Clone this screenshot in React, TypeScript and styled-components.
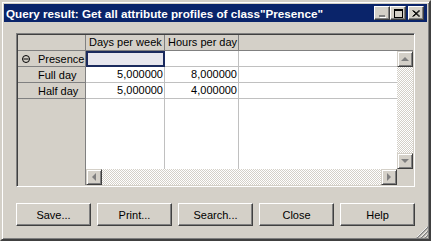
import React from "react";
import styled, { createGlobalStyle } from "styled-components";

const face = "#d4d0c8";
const shadow = "#808080";
const dark = "#404040";
const gridLine = "#c0c0c0";
const navy = "#0a246a";

const Global = createGlobalStyle`
  html, body { margin: 0; padding: 0; background: ${face}; }
  body { font-family: "Liberation Sans", Arial, sans-serif; font-size: 11px; color: #000; }
`;

const Window = styled.div`
  position: relative;
  width: 431px;
  height: 241px;
  box-sizing: border-box;
  background: ${face};
  border: 2px solid;
  border-color: ${face} ${dark} ${dark} ${face};
  box-shadow: inset 1px 1px #fff, inset -1px -1px ${shadow};
  padding: 2px;
  display: flex;
  flex-direction: column;
`;

const TitleBar = styled.div`
  height: 18px;
  flex: none;
  background: ${navy};
  display: flex;
  align-items: center;
  padding: 0 3px 0 2px;
`;

const Title = styled.div`
  flex: 1;
  color: #fff;
  font-weight: bold;
  font-size: 11.7px;
  white-space: nowrap;
`;

const CapButton = styled.div<{ $gap?: boolean }>`
  width: 16px;
  height: 14px;
  box-sizing: border-box;
  margin-left: ${(p) => (p.$gap ? "2px" : "0")};
  background: ${face};
  border: 1px solid;
  border-color: #fff ${dark} ${dark} #fff;
  box-shadow: inset -1px -1px ${shadow};
  display: flex;
  align-items: center;
  justify-content: center;
`;

const Body = styled.div`
  flex: 1;
  display: flex;
  flex-direction: column;
  padding: 11px 12px;
`;

const Frame = styled.div`
  height: 154px;
  box-sizing: border-box;
  border: 1px solid;
  border-color: ${shadow} #fff #fff ${shadow};
  box-shadow: inset 1px 1px ${dark}, inset -1px -1px ${face};
  padding: 1px;
  display: grid;
  grid-template-columns: 68px 79px 74px 1fr 16px;
  grid-template-rows: 16px 1fr 16px;
`;

const HeadCell = styled.div<{ $span?: number; $last?: boolean }>`
  grid-column: span ${(p) => p.$span ?? 1};
  box-sizing: border-box;
  background: ${face};
  border-bottom: 1px solid ${shadow};
  border-right: ${(p) => (p.$last ? "none" : `1px solid ${shadow}`)};
  padding: 0 3px;
  line-height: 15px;
  white-space: nowrap;
  overflow: hidden;
`;

const RowHeads = styled.div`
  grid-column: 1;
  grid-row: 2 / span 2;
  background: ${face};
  border-right: 1px solid ${shadow};
  display: flex;
  flex-direction: column;
`;

const RowHead = styled.div`
  height: 16px;
  box-sizing: border-box;
  border-bottom: 1px solid ${shadow};
  display: flex;
  align-items: center;
  padding-left: 4px;
  gap: 8px;
  white-space: nowrap;
`;

const IconSlot = styled.span`
  width: 8px;
  height: 8px;
  display: inline-flex;
`;

const Data = styled.div`
  grid-column: 2 / span 3;
  grid-row: 2;
  background: #fff;
  display: flex;
  min-height: 0;
`;

const Column = styled.div<{ $w?: number }>`
  width: ${(p) => (p.$w ? `${p.$w}px` : "auto")};
  flex: ${(p) => (p.$w ? "none" : "1")};
  display: flex;
  flex-direction: column;
`;

const Cell = styled.div<{ $line?: boolean; $selected?: boolean }>`
  height: 16px;
  box-sizing: border-box;
  border-bottom: 1px solid ${gridLine};
  border-right: ${(p) => (p.$line ? `1px solid ${gridLine}` : "none")};
  text-align: right;
  padding-right: 1px;
  line-height: 15px;
  white-space: nowrap;
  ${(p) =>
    p.$selected &&
    `
    border: 2px solid #1a2a5e;
    background: #e6e6ee;
  `}
`;

const Filler = styled.div<{ $line?: boolean }>`
  flex: 1;
  border-right: ${(p) => (p.$line ? `1px solid ${gridLine}` : "none")};
`;

const VScroll = styled.div`
  grid-column: 5;
  grid-row: 2;
  display: flex;
  flex-direction: column;
  min-height: 0;
`;

const HScroll = styled.div`
  grid-column: 2 / span 3;
  grid-row: 3;
  display: flex;
`;

const Corner = styled.div`
  grid-column: 5;
  grid-row: 3;
  background: ${face};
`;

const Track = styled.div`
  flex: 1;
  background: repeating-conic-gradient(${face} 0 25%, #fff 0 50%) 0 0 / 2px 2px;
`;

const ScrollButton = styled.div`
  width: 16px;
  height: 16px;
  flex: none;
  box-sizing: border-box;
  background: ${face};
  border: 1px solid;
  border-color: ${face} ${dark} ${dark} ${face};
  box-shadow: inset 1px 1px #fff, inset -1px -1px ${shadow};
  display: flex;
  align-items: center;
  justify-content: center;
`;

const Arrow = styled.span<{ $dir: "up" | "down" | "left" | "right" }>`
  width: 0;
  height: 0;
  border: 4px solid transparent;
  ${(p) =>
    p.$dir === "up"
      ? `border-bottom-color: ${shadow}; border-top-width: 0; margin-top: -1px;`
      : p.$dir === "down"
      ? `border-top-color: ${shadow}; border-bottom-width: 0;`
      : p.$dir === "left"
      ? `border-right-color: ${shadow}; border-left-width: 0; margin-left: -1px;`
      : `border-left-color: ${shadow}; border-right-width: 0;`}
`;

const Buttons = styled.div`
  margin-top: 16px;
  display: flex;
  gap: 6px;
`;

const Button = styled.div`
  width: 75px;
  height: 23px;
  box-sizing: border-box;
  background: ${face};
  border: 1px solid;
  border-color: #fff ${dark} ${dark} #fff;
  box-shadow: inset -1px -1px ${shadow};
  display: flex;
  align-items: center;
  justify-content: center;
`;

const Grip = styled.svg`
  position: absolute;
  right: 0;
  bottom: 0;
`;

const rows = [
  { name: "Full day", days: "5,000000", hours: "8,000000" },
  { name: "Half day", days: "5,000000", hours: "4,000000" },
];

function Collapse() {
  return (
    <svg width="8" height="8" viewBox="0 0 8 8">
      <circle cx="4" cy="4" r="3.5" fill="none" stroke="#000" />
      <line x1="1.5" y1="4" x2="6.5" y2="4" stroke="#000" />
    </svg>
  );
}

export default function App() {
  return (
    <>
      <Global />
      <Window>
        <TitleBar>
          <Title>Query result: Get all attribute profiles of class"Presence"</Title>
          <CapButton>
            <svg width="10" height="9" viewBox="0 0 10 9">
              <rect x="2" y="6" width="6" height="2" fill={shadow} />
              <rect x="3" y="8" width="6" height="1" fill="#fff" />
            </svg>
          </CapButton>
          <CapButton>
            <svg width="9" height="9" viewBox="0 0 9 9">
              <rect x="0.5" y="1.5" width="8" height="7" fill="none" stroke="#000" />
              <rect x="0" y="0" width="9" height="2" fill="#000" />
            </svg>
          </CapButton>
          <CapButton $gap>
            <svg width="8" height="7" viewBox="0 0 8 7">
              <path d="M0.5 0.5 L7 6.5 M1.5 0.5 L8 6.5 M7 0.5 L0.5 6.5 M8 0.5 L1.5 6.5" stroke="#000" strokeWidth="1" />
            </svg>
          </CapButton>
        </TitleBar>
        <Body>
          <Frame>
            <HeadCell />
            <HeadCell>Days per week</HeadCell>
            <HeadCell>Hours per day</HeadCell>
            <HeadCell $span={2} $last />
            <RowHeads>
              <RowHead>
                <IconSlot>
                  <Collapse />
                </IconSlot>
                Presence
              </RowHead>
              {rows.map((r) => (
                <RowHead key={r.name}>
                  <IconSlot />
                  {r.name}
                </RowHead>
              ))}
            </RowHeads>
            <Data>
              <Column $w={79}>
                <Cell $line $selected />
                {rows.map((r) => (
                  <Cell key={r.name} $line>
                    {r.days}
                  </Cell>
                ))}
                <Filler $line />
              </Column>
              <Column $w={74}>
                <Cell $line />
                {rows.map((r) => (
                  <Cell key={r.name} $line>
                    {r.hours}
                  </Cell>
                ))}
                <Filler $line />
              </Column>
              <Column>
                <Cell />
                {rows.map((r) => (
                  <Cell key={r.name} />
                ))}
                <Filler />
              </Column>
            </Data>
            <VScroll>
              <ScrollButton>
                <Arrow $dir="up" />
              </ScrollButton>
              <Track />
              <ScrollButton>
                <Arrow $dir="down" />
              </ScrollButton>
            </VScroll>
            <HScroll>
              <ScrollButton>
                <Arrow $dir="left" />
              </ScrollButton>
              <Track />
              <ScrollButton>
                <Arrow $dir="right" />
              </ScrollButton>
            </HScroll>
            <Corner />
          </Frame>
          <Buttons>
            <Button>Save...</Button>
            <Button>Print...</Button>
            <Button>Search...</Button>
            <Button>Close</Button>
            <Button>Help</Button>
          </Buttons>
        </Body>
        <Grip width="13" height="13" viewBox="0 0 13 13">
          <path d="M12 1 L1 12 M12 5 L5 12 M12 9 L9 12" stroke={shadow} strokeWidth="1.5" />
          <path d="M11 1 L1 11 M11 5 L5 11 M11 9 L9 11" stroke="#fff" strokeWidth="0.8" />
        </Grip>
      </Window>
    </>
  );
}
